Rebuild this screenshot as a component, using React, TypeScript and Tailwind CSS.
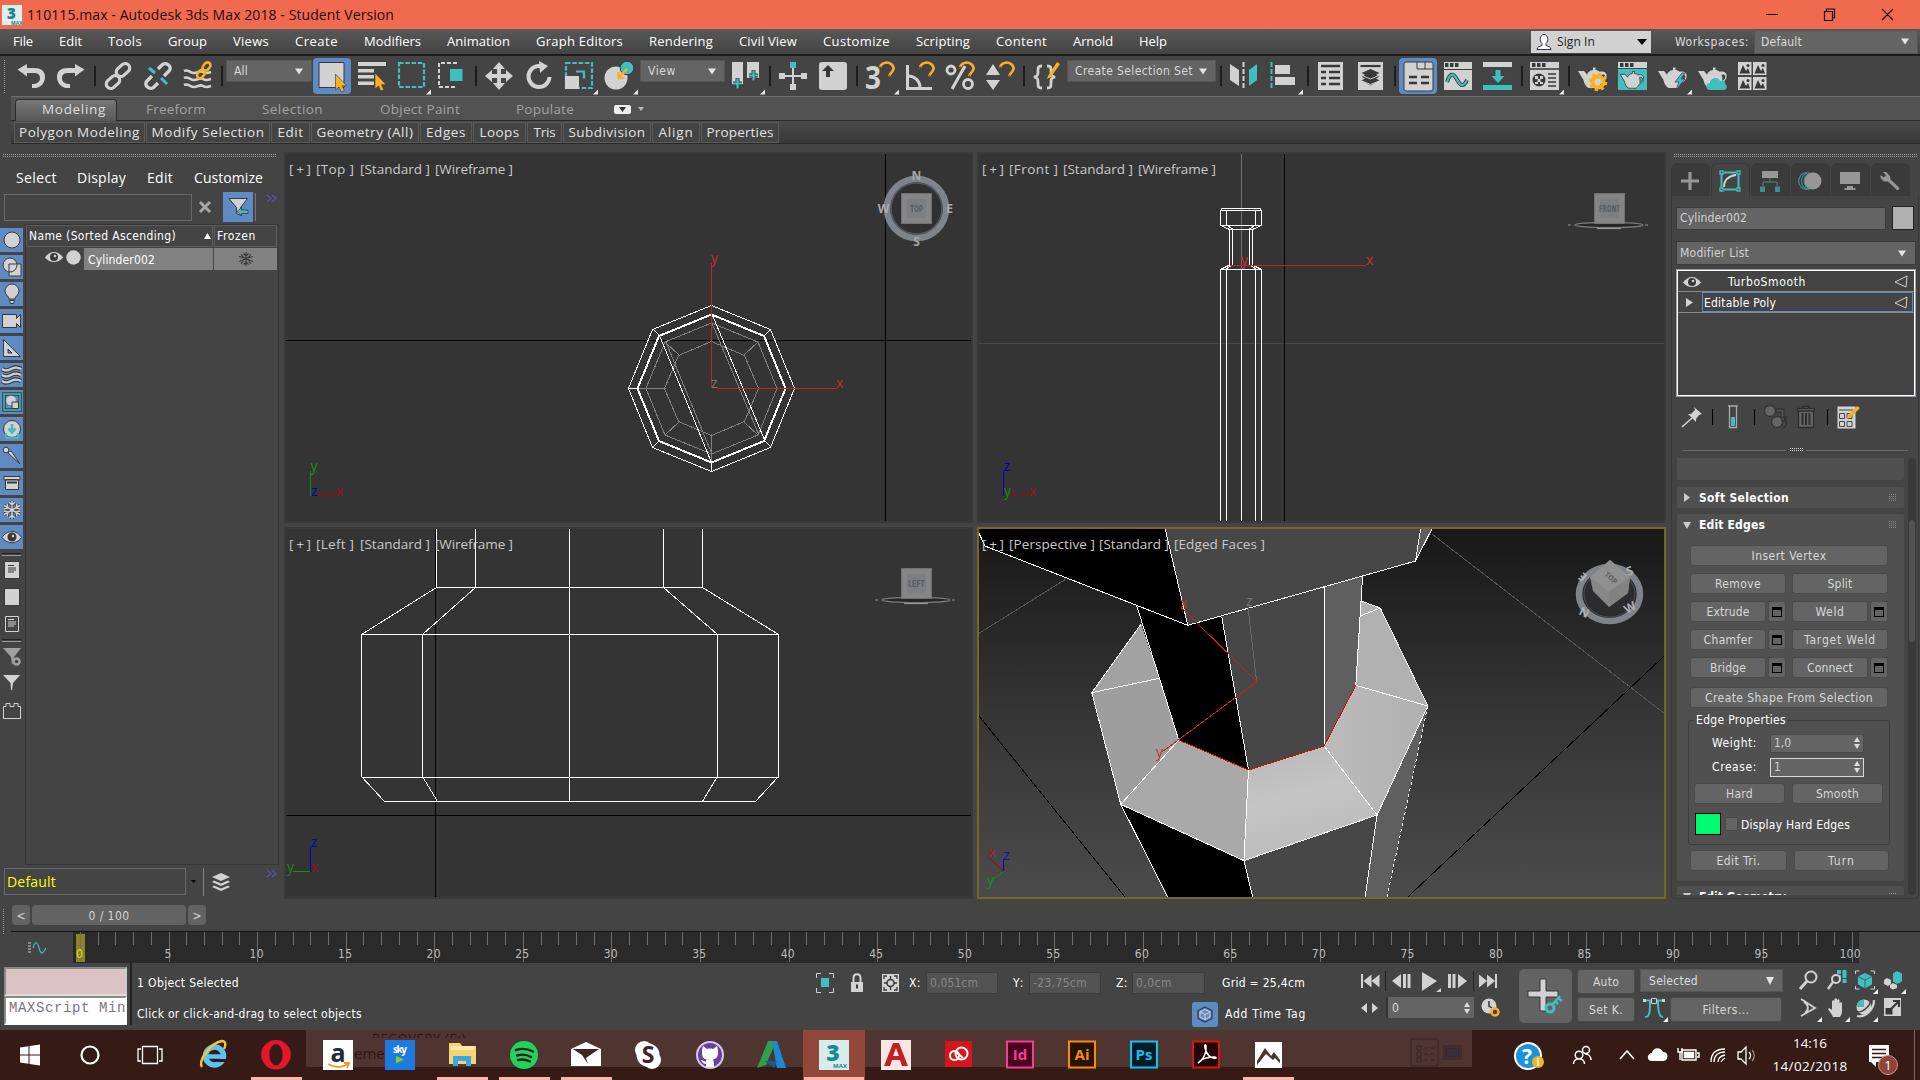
import React, { useLayoutEffect, useRef } from "react";

const G = "#d2d2d2";
const T = "#41bfc0";
const O = "#fbb022";
const D = "#383838";

/* Text whose tracking is adjusted so that it spans a given width. */
function Fit({ w, children, className = "" }: { w: number; children: string; className?: string }) {
  const ref = useRef<HTMLSpanElement>(null);
  useLayoutEffect(() => {
    const el = ref.current;
    if (!el) return;
    el.style.letterSpacing = "0px";
    const natural = el.getBoundingClientRect().width;
    el.style.letterSpacing = `${(w - natural) / children.length}px`;
  }, [w, children]);
  return (
    <span ref={ref} className={"inline-block shrink-0 whitespace-pre " + className}>
      {children}
    </span>
  );
}

function Slot({ children, fly, active }: { children: React.ReactNode; fly?: boolean; active?: boolean }) {
  return (
    <div className="h-10 w-10 shrink-0">
      <svg width="40" height="40" viewBox="0 0 40 40" className="block">
        {active && <rect x="1" y="2" width="38" height="36" rx="4" fill="#5f8bc4" />}
        {children}
        {fly && <path d="M39 33.500v5h-5z" fill="#e6e6e6" />}
      </svg>
    </div>
  );
}

const Sep = () => (
  <div className="flex h-10 w-[7px] shrink-0 items-center justify-center">
    <div className="h-5 w-[2px] bg-[#1c1c1c]" />
  </div>
);

function Drop({ label, cls, tw }: { label: string; cls: string; tw: number }) {
  return (
    <div className={"mt-1 flex h-[22px] shrink-0 items-center justify-between border border-[#555] bg-[#646464] pr-2 pl-[7px] text-[12px] text-[#d8d8d8] " + cls}>
      <Fit w={tw}>{label}</Fit>
      <svg width="8" height="7" viewBox="0 0 8 7"><path d="M0 .500h8l-4 6z" fill="#e4e4e4" /></svg>
    </div>
  );
}

const Magnet = () => (
  <g fill="none" stroke={O} strokeWidth="2.600">
    <path d="M20 11c1.500-4 7-6 11-3s3 6 0 9l-2 3" />
    <path d="M19.500 13l1-2.500M30 18.500l-1.500 2.500" stroke="#8a5d00" strokeWidth="1" />
  </g>
);

const Teapot = () => (
  <path
    d="M5 15h6l3 3.500c1-2.500 3-4 6-4.500v-2.500h2.500V14c2 .2 3 .8 4 1.800 5-1.300 8 1.500 7 5.500-.6 3-3 5-5.500 6-.8 2-2 3.700-3.500 4.700h-9c-3-1.500-4.500-5-5-8zm23.500 4c1 2 1 4 .5 6 2-.8 3-2 3.300-4 .3-2-1.300-3-3.800-2z"
    fill={G}
    fillRule="evenodd"
  />
);

const Cursor = ({ x, y }: { x: number; y: number }) => (
  <path transform={`translate(${x} ${y})`} d="M0 0v16l3.500-3 2.300 5 3-1.300-2.300-5h4.700z" fill={O} stroke={D} strokeWidth=".6" />
);

function Toolbar() {
  return (
    <div className="flex h-10 shrink-0 bg-[#444444] pl-[3px]">
      <div className="mt-1 mr-[5px] h-[34px] w-[3px] bg-[conic-gradient(#999_25%,transparent_0)] bg-[length:2px_2px]" />
      <Slot><path d="M6.500 13.500L16 8v4h7c7 0 11 3 11 9s-4 10-9 11h-4v-4c5 0 8-2 8-6s-3-5-6-5h-7v3.500z" fill={G} /></Slot>
      <Slot><path d="M33.500 13.500L24 8v4h-7C10 12 6 15 6 21s4 10 9 11h4v-4c-5 0-8-2-8-6s3-5 6-5h7v3.500z" fill={G} /></Slot>
      <Sep />
      <Slot>
        <g fill="none" stroke={G} strokeWidth="3.200">
          <rect x="-7.500" y="-4.500" width="15" height="9" rx="4.500" transform="translate(25 14) rotate(-42)" />
          <rect x="-7.500" y="-4.500" width="15" height="9" rx="4.500" transform="translate(15 26) rotate(-42)" />
        </g>
      </Slot>
      <Slot>
        <g fill="none" stroke={G} strokeWidth="3.400">
          <path d="M20 13l4-4c4-4 11 2 7 6l-5 5M20 27l-4 4c-4 4-11-2-7-6l5-5" />
          <path d="M11 12l6 5M23 22l6 6" stroke={T} strokeWidth="3" />
        </g>
      </Slot>
      <Slot>
        <g fill="none" stroke={G} strokeWidth="2.600">
          <path d="M6 15c4-2 6 2 10 2s6-3 9-1 5 1 8 0M6 22c4-2 6 2 10 2s6-3 9-1 5 1 8 0M6 29c4-2 6 2 10 2s6-3 9-1 5 1 8 0" />
        </g>
        <g fill="none" stroke={O} strokeWidth="2.600">
          <rect x="-4.500" y="-3" width="9" height="6" rx="3" transform="translate(28.500 10.500) rotate(-50)" />
          <rect x="-4.500" y="-3" width="9" height="6" rx="3" transform="translate(23 18) rotate(-50)" />
        </g>
      </Slot>
      <Sep />
      <Drop label="All" tw={14} cls="w-[86px] ml-px" />
      <Slot active><path d="M7 6.500h25v25H7z" fill={G} stroke={D} /><Cursor x={23.500} y={18} /></Slot>
      <Slot><path d="M6 6h28v4H6zM6 13h16v3.500H6zM6 19h16v3.500H6zM6 25.500h16V29H6z" fill={G} /><Cursor x={23} y={17} /></Slot>
      <Slot fly><rect x="7" y="7" width="25" height="24" fill="none" stroke={T} strokeWidth="2.200" strokeDasharray="4.500 1.800" /></Slot>
      <Slot><path d="M25 7H7v24h18" fill="none" stroke={G} strokeWidth="2" strokeDasharray="4 2" /><path d="M18 13h12.500v12H18z" fill={T} /></Slot>
      <Sep />
      <Slot><path d="M20 6l6 7h-4v5h5v-4l7 6-7 6v-4h-5v5h4l-6 7-6-7h4v-5h-5v4l-7-6 7-6v4h5v-5h-4z" fill={G} /></Slot>
      <Slot><path d="M22 10h-2a10.500 10.500 0 1 0 10.500 11" fill="none" stroke={G} strokeWidth="4" /><path d="M20 5l9 5-8 7z" fill={G} /></Slot>
      <Slot fly>
        <rect x="7" y="7" width="26" height="25" fill="none" stroke={T} strokeWidth="2.200" strokeDasharray="4.500 1.800" />
        <path d="M6 20h14v13H6z" fill={G} /><path d="M17 15.500h8v7" fill="none" stroke={T} strokeWidth="2.200" />
      </Slot>
      <Slot fly>
        <circle cx="17" cy="22" r="11.500" fill={G} /><circle cx="28" cy="12" r="6.800" fill={T} stroke={D} />
        <path d="M28 13l-8 8m-.5-5v6h6" fill="none" stroke={O} strokeWidth="2.400" />
      </Slot>
      <Drop label="View" tw={28} cls="w-[85px] mx-px" />
      <Slot fly>
        <path d="M6 6h11v22H6zM21 6h12v16H21z" fill={G} />
        <path d="M11.500 22v11M7 27.500h9M27.500 14v11M23 19.500h9" stroke={D} strokeWidth="4" /><path d="M11.500 22.500v10M7 27.500h9M27.500 14.500v10M23 19.500h9" stroke={T} strokeWidth="2.200" />
      </Slot>
      <Sep />
      <Slot>
        <path d="M20 10v20M9 20h22" stroke={G} strokeWidth="2" /><path d="M17 6h6v6h-6z" fill={T} />
        <path d="M17 28h6v6h-6zM6 17h6v6H6zM28 17h6v6h-6z" fill={G} />
      </Slot>
      <Slot><rect x="6" y="6" width="28" height="28" rx="3" fill={G} /><path d="M15 9l6 6h-4v6h-4v-6H9z" fill={D} /></Slot>
      <Sep />
      <Slot fly><text x="5" y="33" fontSize="32" fontWeight="700" textLength="16" lengthAdjust="spacingAndGlyphs" fill={G} fontFamily="Open Sans">3</text><Magnet /></Slot>
      <Slot><path d="M7.500 9v23.500H32M8 20c7 0 12 5 12 12" fill="none" stroke={G} strokeWidth="3" /><Magnet /></Slot>
      <Slot>
        <g fill="none" stroke={G} strokeWidth="2.800"><circle cx="11" cy="14" r="4" /><circle cx="28" cy="28" r="4.500" /><path d="M25 10L12 33" strokeWidth="3" /></g><Magnet />
      </Slot>
      <Slot><path d="M13 8l7 11H6zM6 24h14l-7 10z" fill={G} /><Magnet /></Slot>
      <Sep />
      <Slot>
        <path d="M15 10c-4 0-4 1-4 5s0 5-4 6c4 1 4 2 4 6s0 5 4 5M20 10c4 0 4 1 4 5s0 5 4 6c-4 1-4 2-4 6s0 5-4 5" fill="none" stroke={G} strokeWidth="2.800" />
        <path d="M21 20l9-14 3 2-9 13-4 2z" fill={O} />
      </Slot>
      <Drop label="Create Selection Set" tw={118} cls="w-[149px]" />
      <div className="w-px" />
      <Sep />
      <Slot><path d="M6 8l9 6v16l-9-6z" fill={G} /><path d="M19.500 6v28" stroke={G} strokeWidth="2" strokeDasharray="5 2" /><path d="M33 8l-8 6v16l8-6z" fill={T} /></Slot>
      <Slot fly><path d="M7.500 6v28" stroke={T} strokeWidth="2" strokeDasharray="5 2" /><path d="M11 9h15v9H11zM11 21h20v8H11z" fill={G} /></Slot>
      <Sep />
      <Slot><path d="M7 6h25v28H7z" fill={G} /><path d="M10 10h19M10 16h5m3 0h11M10 22h5m3 0h11M10 28h5m3 0h11" stroke={D} strokeWidth="2.400" /></Slot>
      <Slot><path d="M7 6h25v28H7z" fill={G} /><path d="M9.500 10h20" stroke={D} strokeWidth="2.200" /><path d="M19.500 13l9 4-3.500 1.800 3.500 2-3.500 1.700 3.500 2-9 5-9-5 3.500-2-3.500-1.700 3.500-2L10.500 17z" fill={D} /><path d="M11 19.500l8.500 3.500 8.500-3.500M11 25l8.500 3.500L28 25" stroke={G} fill="none" /></Slot>
      <Sep />
      <Slot active>
        <rect x="6" y="6" width="29" height="29" rx="2" fill={G} stroke={D} />
        <path d="M19 6v7h16M27 6v7" stroke={D} fill="none" /><path d="M11 21h8m4 0h8M11 27h8m4 0h8" stroke={D} strokeWidth="2.600" />
      </Slot>
      <Slot><path d="M6 6h28v28H6z" fill={G} /><path d="M7 9h3.500m1.500 0h3.500m1.500 0h3.500" stroke={D} strokeWidth="4" /><path d="M6 13.500h28" stroke={D} /><path d="M9 26c3-9 6-9 9-4s6 12 11 2" stroke={D} strokeWidth="4" fill="none" /><path d="M9 26c3-9 6-9 9-4s6 12 11 2" stroke={T} strokeWidth="2.200" fill="none" /></Slot>
      <Slot><path d="M5 6h29v5H5z" fill={G} /><path d="M5 29h29v5H5zM17.500 14h5v6h4L20 27l-6.500-7h4z" fill={T} /></Slot>
      <Sep />
      <Slot fly>
        <path d="M5 6h29v28H5z" fill={G} /><path d="M7 9h3.500m1.500 0h3.500m1.500 0h3.500" stroke={D} strokeWidth="4" /><path d="M5 13h29M23 18h8m-8 4h8m-8 4h8m-8 4h8" stroke={D} strokeWidth="1.700" />
        <circle cx="14" cy="24" r="6.500" fill={D} /><path d="M10 20h3v3h-3zM15 20h3v3h-3zM12.500 23h3v3h-3zM10 26h3v2h-3zM15 26h3v2h-3z" fill={G} />
      </Slot>
      <Sep />
      <div className="w-px" />
      <Slot><Teapot /><circle cx="25" cy="26" r="5.500" fill="none" stroke={O} strokeWidth="4" /><circle cx="25" cy="26" r="8" fill="none" stroke={O} strokeWidth="2.500" strokeDasharray="3.200 3.080" /></Slot>
      <Slot><path d="M5 6h29v6H5z" fill={G} /><path d="M7 9h3.500m1.500 0h3.500m1.500 0h3.500" stroke={D} strokeWidth="4" /><path d="M5 13h29v21H5z" fill={T} /><g transform="translate(3 6) scale(.82)" stroke={D}><Teapot /></g></Slot>
      <Slot fly><Teapot /><path d="M29 17l-7 9h4l-3 8 9-11h-4l4-6z" fill={T} stroke={D} strokeWidth=".7" /></Slot>
      <Slot><Teapot /><path d="M17 34c-5 0-5-7 0-7 0-5 8-7 10-2 5-1 6 2 5 3 3 1 2 6-1 6z" fill={T} /></Slot>
      <Slot>
        {[[5, 6], [20, 6], [5, 21], [20, 21]].map(([x, y]) => (
          <g key={`${x}-${y}`} transform={`translate(${x} ${y})`}><path d="M0 0h13.500v13H0z" fill={G} /><path d="M1.500 11.500L5 3l3 6 2-3 2 5.500z" fill={D} /><circle cx="10" cy="3.500" r="1.500" fill={D} /></g>
        ))}
      </Slot>
    </div>
  );
}

const menus: [string, number][] = [
  ["File", 20], ["Edit", 23], ["Tools", 34], ["Group", 39], ["Views", 36], ["Create", 43], ["Modifiers", 57], ["Animation", 63],
  ["Graph Editors", 87], ["Rendering", 64], ["Civil View", 58], ["Customize", 67], ["Scripting", 54], ["Content", 51], ["Arnold", 40], ["Help", 28],
];

function Header() {
  return (
    <>
      <div className="flex h-[29px] shrink-0 items-center bg-[#f06a50] pl-[2px] font-['Open_Sans',sans-serif] text-[14px] text-[#1d0d0a]">
        <svg width="20" height="20" viewBox="0 0 20 20"><path d="M0 0h20v20H0z" fill="#dfeeee" /><text x="5" y="14" fontSize="15" fontWeight="800" fill="#16858c">3</text><text x="9" y="19.500" fontSize="5" fontWeight="700" fill="#16858c">MAX</text></svg>
        <Fit w={367} className="ml-[5px]">110115.max - Autodesk 3ds Max 2018 - Student Version</Fit>
        <svg width="130" height="20" viewBox="0 0 130 20" className="mr-[26px] ml-auto" fill="none" stroke="#1a0a08">
          <path d="M2 9.500h12M60.500 6.500h8v9h-8zM62.500 6v-2h8v9h-2M118 4l11 11M129 4l-11 11" strokeWidth="1.200" />
        </svg>
      </div>
      <div className="flex h-[27px] shrink-0 items-center border-b-2 border-[#1c1c1c] bg-gradient-to-b from-[#585858] to-[#444] pl-[13px] font-['Open_Sans',sans-serif] text-[13px] text-white">
        <div className="flex gap-[26px]">{menus.map(([m, w]) => <Fit key={m} w={w}>{m}</Fit>)}</div>
        <div className="mr-6 ml-auto flex h-[22px] w-[120px] items-center bg-[#d2d2d2] pr-1 pl-[5px] text-[12px] text-[#222]">
          <svg width="16" height="18" viewBox="0 0 16 18" fill="#fff" stroke="#334"><path d="M1 16.500c0-3 3-3 5-4v-2C3 8 4 1.500 8 1.500S13 8 10 10.500v2c2 1 5 1 5 4z" /></svg>
          <Fit w={38} className="ml-[5px]">Sign In</Fit>
          <svg width="10" height="7" viewBox="0 0 10 7" className="ml-auto"><path d="M0 1h10L5 7z" fill="#000" /></svg>
        </div>
        <Fit w={74} className="mr-[5px] font-['DejaVu_Sans_Condensed','DejaVu_Sans',sans-serif] text-[12px] text-[#dcdcdc]">Workspaces:</Fit>
        <div className="mr-[2px] flex h-[24px] w-[164px] items-center justify-between border border-[#555] bg-[#646464] pr-2 pl-[6px] font-['DejaVu_Sans_Condensed','DejaVu_Sans',sans-serif] text-[12px] text-[#dcdcdc]">
          <Fit w={41}>Default</Fit>
          <svg width="8" height="7" viewBox="0 0 8 7"><path d="M0 .500h8l-4 6z" fill="#e4e4e4" /></svg>
        </div>
      </div>
    </>
  );
}

function Ribbon() {
  const panel = "flex h-[21px] items-center justify-center border border-[#5a5a5a] bg-[#444]";
  return (
    <div className="shrink-0 font-['Open_Sans',sans-serif] text-[13.500px]">
      <div className="ml-[11px] flex h-[25px] items-center border-t border-b border-t-[#6e6e6e] border-b-[#282828] bg-[#525252] pt-px text-[#a3a3a3]">
        <div className="mt-px ml-1 flex h-[22px] w-[102px] items-center rounded-t-sm border border-b-0 border-[#2c2c2c] bg-gradient-to-b from-[#777] to-[#585858] pb-px pl-[26px] text-[#dedede]"><Fit w={64}>Modeling</Fit></div>
        <Fit w={60} className="ml-[29px]">Freeform</Fit>
        <Fit w={61} className="ml-[56px]">Selection</Fit>
        <Fit w={80} className="ml-[57px]">Object Paint</Fit>
        <Fit w={58} className="ml-[56px]">Populate</Fit>
        <div className="ml-[40px] flex h-[9px] w-[17px] items-center justify-center rounded-[2px] bg-[#eee]"><svg width="7" height="5" viewBox="0 0 7 5"><path d="M0 0h7L3.500 5z" fill="#333" /></svg></div>
        <svg width="6" height="4" viewBox="0 0 6 4" className="ml-[7px]"><path d="M0 0h6L3 4z" fill="#bbb" /></svg>
      </div>
      <div className="ml-[11px] flex h-[23px] items-center gap-px border-b border-[#282828] bg-gradient-to-b from-[#4a4a4a] to-[#383838] pl-[3px] text-[#e2e2e2]">
        <div className={panel + " w-[131px]"}><Fit w={121}>Polygon Modeling</Fit></div>
        <div className={panel + " w-[124px]"}><Fit w={113}>Modify Selection</Fit></div>
        <div className={panel + " w-[39px]"}><Fit w={26}>Edit</Fit></div>
        <div className={panel + " w-[108px]"}><Fit w={97}>Geometry (All)</Fit></div>
        <div className={panel + " w-[52px]"}><Fit w={40}>Edges</Fit></div>
        <div className={panel + " w-[53px]"}><Fit w={40}>Loops</Fit></div>
        <div className={panel + " w-[35px]"}><Fit w={22}>Tris</Fit></div>
        <div className={panel + " w-[88px]"}><Fit w={77}>Subdivision</Fit></div>
        <div className={panel + " w-[48px]"}><Fit w={35}>Align</Fit></div>
        <div className={panel + " w-[78px]"}><Fit w={67}>Properties</Fit></div>
      </div>
    </div>
  );
}

const Grip = ({ cls }: { cls: string }) => (
  <div className={"h-[4px] shrink-0 bg-[conic-gradient(#a5a5a5_25%,transparent_0)] bg-[length:2px_2px] " + cls} />
);

const Chevrons = ({ cls }: { cls: string }) => (
  <svg width="12" height="9" viewBox="0 0 12 9" className={cls}><path d="M1 1l4 3.500L1 8M6 1l4 3.500L6 8" fill="none" stroke="#5757a0" strokeWidth="1.300" /></svg>
);

const stripIcons: React.ReactNode[] = [
  <circle cx="12" cy="12" r="8" fill={G} stroke={D} />,
  <g fill={G} stroke={D}><circle cx="10" cy="10" r="7" /><path d="M9 9h12v12H9z" /><path d="M17 9.500a7 7 0 0 1-8 7.500" fill="none" /></g>,
  <path d="M9 17c0-3-4-4-4-8a7 7 0 0 1 14 0c0 4-4 5-4 8zM9.500 18.500h5l-1 3h-3z" fill={G} stroke={D} />,
  <path d="M2.500 5.500h14v4l4-4v13l-4-4v4h-14z" fill={G} stroke={D} />,
  <path d="M3.500 3.500l17 17h-17zM8 13v4h4z" fill={G} fillRule="evenodd" stroke={D} />,
  <g fill="none"><path d="M2 6c4 3 7 1 9 0s5-3 10 0M2 12c4 3 7 1 9 0s5-3 10 0M2 18c4 3 7 1 9 0s5-3 10 0" stroke={D} strokeWidth="4.500" /><path d="M2 6c4 3 7 1 9 0s5-3 10 0M2 12c4 3 7 1 9 0s5-3 10 0M2 18c4 3 7 1 9 0s5-3 10 0" stroke={G} strokeWidth="2.200" /></g>,
  <g><rect x="4" y="4" width="16" height="16" fill="none" stroke={D} strokeWidth="3.500" /><rect x="4" y="4" width="16" height="16" fill="none" stroke={T} strokeWidth="1.500" /><circle cx="11" cy="10.500" r="4.800" fill={G} /><path d="M12 12h6.500v6.500H12z" fill={G} stroke={D} /></g>,
  <g><circle cx="12" cy="12" r="8.500" fill={G} stroke={D} /><path d="M12 7v7M8.500 11.500L12 15.500l3.500-4" stroke={T} strokeWidth="2.500" fill="none" /><path d="M6 16v4.500h12V16" stroke={T} strokeWidth="1.800" fill="none" /></g>,
  <g fill={G} stroke={D}><circle cx="6" cy="6" r="2.800" /><path d="M8 9c0-2 3-2 4-1l8 12z" /></g>,
  <g fill={G} stroke={D}><path d="M5.500 8.500h13v10h-13zM4 5.500h16v3.500H4z" /><path d="M7 11.500h10" strokeWidth="2" /></g>,
  <g><path d="M12 3v18M4 7.500l16 9M20 7.500l-16 9M9 4l3 3 3-3M9 20l3-3 3 3M4 11l4-1-1-4M20 13l-4 1 1 4M20 11l-4-1 1-4M4 13l4 1-1 4" stroke={D} strokeWidth="3" fill="none" /><path d="M12 3v18M4 7.500l16 9M20 7.500l-16 9M9 4l3 3 3-3M9 20l3-3 3 3M4 11l4-1-1-4M20 13l-4 1 1 4M20 11l-4-1 1-4M4 13l4 1-1 4" stroke={G} strokeWidth="1.500" fill="none" /></g>,
  <g><path d="M2 12.500c5-8 15-8 19.500 0-4.500 7-14.500 7-19.500 0z" fill={G} stroke={D} /><circle cx="12" cy="12" r="4.500" fill={D} /><circle cx="13" cy="11" r="1.300" fill={G} /></g>,
];

const Eye = () => (
  <svg width="18" height="12" viewBox="0 0 18 12"><path d="M0 6.500C5-1 13-1 18 6.500 13 12.500 5 12.500 0 6.500z" fill={G} /><circle cx="9" cy="6" r="4" fill={D} /><circle cx="10" cy="5" r="1.300" fill={G} /></svg>
);

function LeftPanel() {
  const ic = "flex h-[27px] w-[24px] items-center justify-center";
  const rule = "mx-[2px] h-[3px] w-[19px] border-t border-b border-t-[#222] border-b-[#999]";
  return (
    <div className="flex w-[284px] shrink-0 flex-col">
      <Grip cls="mt-[10px] ml-[2px] w-[275px]" />
      <div className="mt-[7px] flex h-[24px] items-center pl-4 font-['Open_Sans',sans-serif] text-[14px] text-white">
        <Fit w={41}>Select</Fit><Fit w={49} className="ml-[20px]">Display</Fit><Fit w={26} className="ml-[21px]">Edit</Fit><Fit w={69} className="ml-[21px]">Customize</Fit>
      </div>
      <div className="mt-[3px] flex h-[30px] items-center pl-1">
        <div className="h-[27px] w-[188px] border border-[#6a6a6a]" />
        <svg width="14" height="14" viewBox="0 0 14 14" className="ml-[6px]"><path d="M2 2l10 10M12 2L2 12" stroke="#a5a5a5" strokeWidth="3" /></svg>
        <div className="ml-[11px] h-[30px] w-[30px] bg-[#5f8bc4]">
          <svg width="30" height="30" viewBox="0 0 30 30"><path d="M6 6.500h18.500l-7 9v8l-4-2v-6z" fill={G} stroke={D} /><path d="M14 19.500l4.500-4v2.500H25v3.500h-6.500V24z" fill={T} stroke={D} strokeWidth=".8" /></svg>
        </div>
        <div className="ml-[2px] h-7 w-[2px] border-l border-[#777]" />
        <Chevrons cls="mb-[17px] ml-[9px]" />
      </div>
      <div className="mt-[2px] flex h-[641px]">
        <div className="flex w-[25px] shrink-0 flex-col pt-[4px]">
          <div className="flex flex-col gap-[3px]">
            {stripIcons.map((icon, i) => <svg key={i} width="23" height="24" viewBox="0 0 23 24" className="block bg-[#5f8bc4]">{icon}</svg>)}
          </div>
          <div className={rule + " mt-[4px]"} />
          <div className={ic}><svg width="16" height="18" viewBox="0 0 16 18"><path d="M.500.500h15v17H.500z" fill={G} stroke={D} /><path d="M4 4.500h6M4 7h8M4 9h8M4 11h6" stroke={D} strokeWidth="1.100" /></svg></div>
          <div className={ic}><svg width="16" height="18" viewBox="0 0 16 18"><path d="M.500.500h15v17H.500z" fill={G} stroke={D} /></svg></div>
          <div className={ic}><svg width="16" height="18" viewBox="0 0 16 18"><path d="M1.500 1.500h13v15h-13z" fill="none" stroke={G} /><path d="M4 4.500h6M4 7h8M4 9h8M4 11h6" stroke={G} strokeWidth="1.100" /></svg></div>
          <div className={rule + " mt-[2px]"} />
          <div className={ic + " mt-px"}><svg width="18" height="18" viewBox="0 0 18 18"><path d="M0 0h18l-7 9-2 8-1-8z" fill="#a0a0a0" /><circle cx="13.500" cy="13.500" r="3" fill="#444" stroke="#a0a0a0" strokeWidth="2.500" /></svg></div>
          <div className={ic}><svg width="18" height="18" viewBox="0 0 18 18"><path d="M0 0h17l-7 8-1 7H8L7.500 8z" fill={G} /></svg></div>
          <div className={ic}><svg width="18" height="18" viewBox="0 0 18 18"><path d="M.500 16.500V4.500H3v-3h4v3h4v-3h4v3h2.500v12z" fill="none" stroke={G} /></svg></div>
        </div>
        <div className="w-[254px] border border-[#363636] font-['DejaVu_Sans_Condensed','DejaVu_Sans',sans-serif] text-[12px] text-white">
          <div className="flex h-[22px]">
            <div className="flex w-[187px] items-center justify-between border border-[#5c5c5c] pr-px pl-[2px]"><Fit w={147}>Name (Sorted Ascending)</Fit><svg width="7" height="6" viewBox="0 0 7 6"><path d="M3.500 0L7 6H0z" fill="#fff" /></svg></div>
            <div className="ml-px flex w-[63px] items-center border border-[#5c5c5c] pl-[2px]"><Fit w={39}>Frozen</Fit></div>
          </div>
          <div className="mt-px flex h-[22px] items-center">
            <div className="mb-1 ml-[19px] flex items-center gap-[3px]"><Eye /><svg width="15" height="15" viewBox="0 0 15 15"><circle cx="7.500" cy="7.500" r="7.200" fill={G} /></svg></div>
            <div className="ml-[3px] flex h-full w-[129px] items-center bg-[#818181] pt-px pl-[4px]"><Fit w={67}>Cylinder002</Fit></div>
            <div className="ml-px flex h-full w-[63px] items-center justify-center bg-[#818181]">
              <svg width="14" height="14" viewBox="0 0 14 14"><path d="M7 0v14M0 4.500l5 1.200L14 9.500M14 4.500l-5 1.200L0 9.500M2 2l2.500 3.500M12 2L9.500 5.500M2 12l2.500-3.500M12 12L9.500 8.500M4.500 1.500L7 4l2.500-2.500M4.500 12.500L7 10l2.500 2.500" stroke="#383838" strokeWidth="1.100" fill="none" /></svg>
            </div>
          </div>
        </div>
      </div>
      <div className="mt-[3px] flex h-[27px] items-center pl-1">
        <div className="flex h-[27px] w-[182px] items-center border border-[#6a6a6a] pb-px pl-[2px] font-['Open_Sans',sans-serif] text-[14px] text-[#ffff00]"><Fit w={49}>Default</Fit></div>
        <svg width="5" height="3" viewBox="0 0 5 3" className="ml-[5px]"><path d="M0 0h5L2.500 3z" fill="#000" /></svg>
        <div className="ml-[7px] h-7 w-px bg-[#888]" />
        <svg width="18" height="20" viewBox="0 0 18 20" className="ml-[8px]"><g fill={G}><path d="M9 1l9 4-9 4-9-4zM2 8.500L0 10l9 4 9-4-2-1.500-7 3zM2 13.500L0 15l9 4 9-4-2-1.500-7 3z" /></g></svg>
        <Chevrons cls="mb-[17px] ml-[36px]" />
      </div>
    </div>
  );
}

function Cube({ x, y, label }: { x: number; y: number; label: string }) {
  return (
    <g transform={`translate(${x} ${y})`}>
      <rect x=".5" y=".5" width="30" height="30" fill="#858585" stroke="#707070" />
      <rect x="6" y="6" width="19" height="19" fill="#7c7e83" />
      <text x="15.500" y="18.500" fontSize="8" fontWeight="700" fill="#5a5c60" textAnchor="middle" textLength={label.length * 4.200} lengthAdjust="spacingAndGlyphs">{label}</text>
    </g>
  );
}

const FlatRing = ({ x, y }: { x: number; y: number }) => (
  <g transform={`translate(${x} ${y})`}>
    <path d="M-41 0h3M36 0h3" stroke="#90949a" />
    <ellipse cx="0" cy="0" rx="34" ry="2.600" fill="#262626" stroke="#777b80" strokeWidth="1.400" />
    <path d="M-12 3.600h24" stroke="#a0a0a0" />
  </g>
);

const VLabel = ({ x, y, parts }: { x: number; y: number; parts: [string, number, number][] }) => (
  <g fill="#c9c9c9" fontSize="13.500" fontFamily="Open Sans, sans-serif">
    {parts.map(([t, dx, w]) => <text key={t} x={x + dx} y={y} textLength={w}>{t}</text>)}
  </g>
);

const oct = (r: number, rd: number) =>
  [[0, -r], [rd, -rd], [r, 0], [rd, rd], [0, r], [-rd, rd], [-r, 0], [-rd, -rd]].map(([a, b]) => `${711.500 + a},${388.500 + b}`).join(" ");

function Viewports() {
  const box = "block bg-[#343434] border-2 border-[#393939]";
  return (
    <div className="grid w-[1382px] shrink-0 grid-cols-[689px_689px] grid-rows-[371px_372px] gap-1 pt-2">
      <svg className={box} width="689" height="371" viewBox="286 154 685 367">
        <g shapeRendering="crispEdges" fill="none">
          <path d="M286 340.500h685M885.500 154v367" stroke="#000" />
          <g stroke="#808080">
            <polygon points={oct(65.500, 46.500)} /><polygon points={oct(47, 33)} />
            <path d="M665 342l14 13M758 342l-14 13M665 435l14-13M758 435l-14-13M638 388.500h28M711.500 434v28M665.500 341l46 112M711.500 322l47 112" />
          </g>
          <g stroke="#fff">
            <polygon points={oct(83, 59)} /><polygon points={oct(74, 52.500)} strokeWidth="2" />
            <path d="M653 329l6 6M771 329l-6 6M653 447l6-6M771 447l-6-6M629 388.500h9M711.500 462v9M659.500 335.500l52 127M712 314l53 127" />
          </g>
          <path d="M711.500 263v124M717 388.500h120" stroke="#c8201f" />
          <path d="M310.500 471v25" stroke="#00a000" /><path d="M316 495.500h22" stroke="#b00000" />
        </g>
        <g fontSize="14" fontFamily="Open Sans, sans-serif">
          <text x="711" y="263" fill="#c8302f">y</text><text x="836" y="388" fill="#c8302f">x</text><text x="711" y="388" fill="#777">z</text>
          <text x="310.500" y="470.500" fill="#1c8a1c">y</text><text x="336" y="496" fill="#a01010">x</text><text x="311" y="496" fill="#0000c0">z</text>
        </g>
        <circle cx="916.500" cy="208.500" r="29.500" fill="#303032" stroke="#7f838a" strokeWidth="6.500" />
        <circle cx="916.500" cy="208.500" r="25.500" fill="none" stroke="#55585e" strokeWidth="1.500" />
        <Cube x={901} y={193} label="TOP" />
        <g fontSize="12" fontWeight="700" fill="#a9a9a9" textAnchor="middle" fontFamily="Open Sans, sans-serif">
          <text x="916.500" y="180">N</text><text x="916.500" y="246">S</text><text x="883.500" y="213">W</text><text x="949.500" y="213">E</text>
        </g>
        <VLabel x={289} y={173.500} parts={[["[+]", 0, 22], ["[Top ]", 27, 38], ["[Standard ]", 71, 70], ["[Wireframe ]", 146, 78]]} />
      </svg>

      <svg className={box} width="689" height="371" viewBox="979 154 685 367">
        <g shapeRendering="crispEdges" fill="none">
          <path d="M979 343.500h685" stroke="#4a4a4a" /><path d="M1241.500 154v367" stroke="#707070" /><path d="M1284.500 154v367" stroke="#000" />
          <path
            stroke="#fff"
            d="M1222 208.500h38l1.500 2v15l-9 4h-23l-9-4v-15zM1220.500 210.500h41M1220.500 225.500h41M1226.500 210v15l6 4M1255.500 210v15l-6 4M1229.500 229v36M1232.500 229v36M1249.500 229v36M1252.500 229v36M1229.500 265l-9 4.500h41l-9-4.500M1232 265l-6 4M1250 265l6 4M1220.500 269v252M1226.500 269v252M1241.500 269v252M1255.500 269v252M1261.500 269v252"
          />
          <path d="M1230 265.500h136" stroke="#c8201f" />
          <path d="M1003.500 471v25" stroke="#0000d0" /><path d="M1009 495.500h22" stroke="#b00000" />
        </g>
        <g fontSize="14" fontFamily="Open Sans, sans-serif">
          <text x="1241" y="265" fill="#c8302f">y</text><text x="1366" y="265" fill="#c8302f">x</text>
          <text x="1003.500" y="471" fill="#0000c0">z</text><text x="1004" y="496" fill="#1c8a1c">y</text><text x="1029" y="496" fill="#a01010">x</text>
        </g>
        <FlatRing x={1609} y={225} /><Cube x={1594} y={193} label="FRONT" />
        <VLabel x={982} y={173.500} parts={[["[+]", 0, 22], ["[Front ]", 27, 49], ["[Standard ]", 81, 70], ["[Wireframe ]", 156, 78]]} />
      </svg>

      <svg className={box} width="689" height="372" viewBox="286 529 685 368">
        <g shapeRendering="crispEdges" fill="none">
          <path d="M286 815.500h685M435.500 529v368" stroke="#000" />
          <path
            stroke="#fff"
            d="M436.500 529v58.500h266V529M475.500 529v58.500l-53 47v142l15 25M663.500 529v58.500l54 47v142l-15 25M569.500 529v272M436.500 587.500l-75 47v142l23 25h371l23-25v-142l-76-47M361.500 634.500h417M361.500 777.500h417"
          />
          <path d="M310.500 847v25" stroke="#0000d0" /><path d="M293 871.500h17" stroke="#00a000" />
        </g>
        <g fontSize="14" fontFamily="Open Sans, sans-serif">
          <text x="310.500" y="847" fill="#0000c0">z</text><text x="287" y="872" fill="#1c8a1c">y</text><text x="311" y="872" fill="#a01010">x</text>
        </g>
        <FlatRing x={916} y={600} /><Cube x={901} y={568} label="LEFT" />
        <VLabel x={289} y={548.500} parts={[["[+]", 0, 22], ["[Left ]", 27, 38], ["[Standard ]", 71, 70], ["[Wireframe ]", 146, 78]]} />
      </svg>

      <svg className="block border-2 border-[#7d6523]" width="689" height="372" viewBox="979 529 685 368">
        <defs>
          <linearGradient id="sky" x1="0" y1="0" x2="0" y2="1"><stop offset="0" stopColor="#181818" /><stop offset=".5" stopColor="#353535" /><stop offset="1" stopColor="#4b4b4b" /></linearGradient>
          <linearGradient id="lit" x1="0" y1="0" x2=".3" y2="1"><stop offset="0" stopColor="#b9b9b9" /><stop offset=".5" stopColor="#c4c4c4" /><stop offset="1" stopColor="#bcbcbc" /></linearGradient>
          <linearGradient id="side" x1="0" y1="0" x2="1" y2="0"><stop offset="0" stopColor="#bcbcbc" /><stop offset="1" stopColor="#b0b0b0" /></linearGradient>
        </defs>
        <path d="M979 529h685v368H979z" fill="url(#sky)" />
        <g transform="translate(960 520) scale(.45285 .33333)" shapeRendering="crispEdges">
          <g fill="none">
            <path d="M233 178L42 340M1042 42l513 538" stroke="#555" vectorEffect="non-scaling-stroke" />
            <path d="M42 588l326 549M1555 408L984 1137" stroke="#000" vectorEffect="non-scaling-stroke" />
          </g>
          <path d="M355 853l272 169 21 118H464z" fill="#000" />
          <path d="M627 1022l294-137-27 252H648z" fill="#474747" />
          <path d="M921 885l112-327-91 579h-48z" fill="#5f5f5f" />
          <path d="M291 518L400 312l40 163z" fill="#a2a2a2" />
          <path d="M291 518l149-43 43 185-128 193z" fill="#9e9e9e" />
          <path d="M483 660l154 90-10 272-272-169z" fill="#a9a9a9" />
          <path d="M637 750l167-72 117 207-294 137z" fill="url(#lit)" />
          <path d="M804 678l70-182 159 62-112 327z" fill="url(#side)" />
          <path d="M886 243l42 21 105 294-159-62z" fill="#b1b1b1" />
          <path d="M390 256l113 60 75-26 59 460-154-90z" fill="#000" />
          <path d="M578 290l227-88-1 476-167 72z" fill="#474747" />
          <path d="M805 202l84-34-15 328-70 182z" fill="#5f5f5f" />
          <path d="M42 20h410l51 296L55 78 42 40z" fill="#000" />
          <path d="M452 20h566l-12 103-503 193z" fill="#474747" />
          <path d="M1018 20h26l-38 103z" fill="#5f5f5f" />
          <g fill="none" stroke="#fff">
            {[
              "M42 40l13 38 448 238 503-193 12-103", "M1006 123l36-96", "M452 20l51 296", "M390 256l93 404", "M578 290l59 460-10 272 21 118",
              "M805 202l-1 476 117 207-27 252", "M889 168l-15 328 159 62", "M400 312L291 518l64 335 272 169 294-137 112-327-105-294-42-21",
              "M291 518l149-43", "M884 288l44-24", "M483 660L355 853l107 287",
            ].map((d) => <path key={d} d={d} vectorEffect="non-scaling-stroke" />)}
            <path d="M1033 558l-91 579" strokeDasharray="3 3" vectorEffect="non-scaling-stroke" />
          </g>
          <g fill="none">
            <path d="M636 262l19 223" stroke="#686868" vectorEffect="non-scaling-stroke" />
            <path d="M488 262l168 223-211 212" stroke="#c8201f" vectorEffect="non-scaling-stroke" />
            <path d="M483 660l154 90 167-72 70-182" stroke="#d01010" vectorEffect="non-scaling-stroke" />
          </g>
        </g>
        <g fontSize="14" fontFamily="Open Sans, sans-serif">
          <text x="1180" y="608" fill="#c8302f">x</text><text x="1156" y="757" fill="#c8302f">y</text><text x="1246" y="606" fill="#777">z</text>
          <text x="988" y="857" fill="#b01818">x</text><text x="1003" y="860" fill="#1010c0">z</text><text x="987" y="885" fill="#1c8a1c">y</text>
        </g>
        <path d="M989 858l14 13" stroke="#b00000" fill="none" /><path d="M1003.500 871v-12" stroke="#0000d0" /><path d="M1003 872l-12 9" stroke="#00a000" />
        <ellipse cx="1609.500" cy="594" rx="30.500" ry="27" fill="#2c2c2e" stroke="#7f838a" strokeWidth="6.500" />
        <ellipse cx="1609.500" cy="594" rx="25.500" ry="23" fill="none" stroke="#4c4e52" />
        <path d="M1610 560l20 17-2 16-19 14-16-16-3-14z" fill="#878787" /><path d="M1590 577l19 15 21-15-20-17z" fill="#909090" /><path d="M1609 592l21-15-2 16-19 14z" fill="#828282" />
        <text x="0" y="0" transform="translate(1604 575) rotate(42)" fontSize="7" fontWeight="700" fill="#5f6166">TOP</text>
        <g fontSize="12" fontWeight="700" fill="#b0b0b0" fontFamily="Open Sans, sans-serif">
          <text transform="translate(1588 576) rotate(-140)">E</text><text transform="translate(1628 576) rotate(-20)">S</text>
          <text transform="translate(1578 614) rotate(25)">N</text><text transform="translate(1627 614) rotate(-30)">W</text>
        </g>
        <VLabel x={982} y={548.500} parts={[["[+]", 0, 22], ["[Perspective ]", 27, 86], ["[Standard ]", 117, 70], ["[Edged Faces ]", 192, 91]]} />
      </svg>
    </div>
  );
}

function Btn({ w, tw, children, h = "h-[21px]" }: { w: string; tw: number; children: string; h?: string }) {
  return <div className={"flex shrink-0 items-center justify-center rounded-[3px] border border-[#4a4a4a] bg-[#646464] text-[#d8d8d8] " + h + " " + w}><Fit w={tw}>{children}</Fit></div>;
}

const Mini = () => (
  <div className="ml-[2px] flex h-[21px] w-[18px] shrink-0 items-center justify-center rounded-[3px] border border-[#4a4a4a] bg-[#646464]">
    <div className="h-[10px] w-[10px] border border-t-[3px] border-black" />
  </div>
);

const Dots = () => <div className="mr-[8px] ml-auto h-[8px] w-[8px] bg-[conic-gradient(#8d8d8d_25%,transparent_0)] bg-[length:2px_2px]" />;

function Spin({ v, cls }: { v: string; cls: string }) {
  return (
    <div className={"flex h-[19px] w-[94px] items-center justify-between border bg-[#646464] pr-[3px] pl-[3px] text-[#d0d0d0] " + cls}>
      <span>{v}</span>
      <svg width="6" height="12" viewBox="0 0 6 12"><path d="M3 0l3 5H0zM3 12l3-5H0z" fill="#ddd" /></svg>
    </div>
  );
}

function RightPanel() {
  const tab = "flex h-[33px] w-[39px] items-center justify-center rounded-t-md bg-[#3a3a3a] pt-[3px] pr-[2px]";
  const roll = "rounded-[3px] border border-[#434343] bg-[#505050]";
  const stackTri = <svg width="14" height="13" viewBox="0 0 14 13" className="ml-auto"><path d="M1 7l12-6-1 11z" fill="none" stroke={G} /></svg>;
  return (
    <div className="flex w-[254px] shrink-0 flex-col pl-[5px] font-['DejaVu_Sans_Condensed','DejaVu_Sans',sans-serif] text-[12px]">
      <Grip cls="mt-[10px] ml-[2px] w-[245px]" />
      <div className="mt-[5px] flex gap-px">
        <div className={tab}><svg width="20" height="20" viewBox="0 0 20 20"><path d="M10 1v18M1 10h18" stroke="#979797" strokeWidth="3.200" /></svg></div>
        <div className="flex h-[34px] w-[39px] items-center justify-center rounded-t-md border border-b-0 border-[#393939] bg-[#444] pr-[2px]">
          <svg width="22" height="22" viewBox="0 0 22 22" fill="none" stroke={T}><path d="M4.500 2.500h13M4.500 19.500h13M2.500 4v14M19.500 4v14" strokeWidth="2" /><path d="M1 1h3v3H1zM18 1h3v3h-3zM1 18h3v3H1zM18 18h3v3h-3z" fill="#444" strokeWidth="1.300" /><path d="M5 17c0-7 5-11 12-12" stroke={G} strokeWidth="1.800" /></svg>
        </div>
        <div className={tab}><svg width="20" height="22" viewBox="0 0 20 22"><path d="M2 1h16v7H2z" fill="#979797" /><path d="M10 8v4M3 16v-4h14v4" fill="none" stroke="#3f8d8e" /><path d="M0 16.500h5V22H0zM15 16.500h5V22h-5z" fill="#3f8d8e" /></svg></div>
        <div className={tab}><svg width="24" height="18" viewBox="0 0 24 18"><g fill="none" stroke="#3f8d8e" strokeWidth="1.200"><path d="M9 .500C-2 1-2 17 9 17.500M11 .500C1 2 1 16 11 17.500M13 1C4 3 4 15 13 17" /></g><circle cx="15" cy="9" r="8.500" fill="#979797" /></svg></div>
        <div className={tab}><svg width="20" height="18" viewBox="0 0 20 18"><path d="M0 0h20v12H0zM7 14h6v2h2.500v2h-11v-2H7z" fill="#979797" /></svg></div>
        <div className={tab}><svg width="20" height="20" viewBox="0 0 20 20"><path d="M3 1h3l4 4 .500 3.500 8.500 8c1 2-1 3-2 2.500L8 10.500 4 10.500 .500 7V4L4 6.500l2-2z" fill="#979797" /></svg></div>
      </div>
      <div className="-mt-px flex h-[703px] w-[248px] flex-col rounded-b border border-t-0 border-[#393939] pl-[4px]">
        <div className="mt-[10px] flex items-center">
          <div className="flex h-[23px] w-[210px] items-center border border-[#3b3b3b] bg-[#646464] pl-[3px] text-[#d2d2d2]"><Fit w={67}>Cylinder002</Fit></div>
          <div className="ml-[6px] h-6 w-[22px] border border-[#222] bg-[#b0b0b0]" />
        </div>
        <div className="mt-[11px] flex h-[24px] w-[240px] items-center justify-between border border-[#3b3b3b] bg-[#646464] pr-[9px] pl-[3px] text-[#d2d2d2]"><Fit w={69}>Modifier List</Fit><svg width="8" height="7" viewBox="0 0 8 7"><path d="M0 .500h8l-4 6z" fill="#e4e4e4" /></svg></div>
        <div className="mt-[4px] h-[128px] w-[240px] border-2 border-white text-white outline outline-1 -outline-offset-1 outline-[#9aa0aa]">
          <div className="flex h-[21px] items-center border-b border-[#888] pt-px pr-[6px] pl-[5px]"><Eye /><Fit w={78} className="ml-[27px]">TurboSmooth</Fit>{stackTri}</div>
          <div className="flex h-[21px] items-center border-b border-[#888]">
            <svg width="7" height="9" viewBox="0 0 7 9" className="ml-[8px]"><path d="M0 0l7 4.500L0 9z" fill={G} /></svg>
            <div className="ml-[9px] flex h-[20px] w-[211px] items-center border border-[#5f8bc4] pt-px pr-[4px] pl-[1px]"><Fit w={72}>Editable Poly</Fit>{stackTri}</div>
          </div>
        </div>
        <div className="mt-[7px] flex h-[27px] items-center pb-px pl-[5px]">
          <svg width="22" height="22" viewBox="0 0 22 22"><path d="M13 1l8 7-3 1-3 4 0 3-8-8 3 0 4-4z" fill={G} /><path d="M11 12L1 21" stroke={G} strokeWidth="1.600" /></svg>
          <div className="ml-[9px] h-4 w-px bg-black" />
          <svg width="10" height="24" viewBox="0 0 10 24" className="ml-[15px]"><path d="M0 1h10M1.500 1v21.500h7V1" fill="none" stroke="#aaa" strokeWidth="1.300" /><path d="M3 12h4v9H3z" fill={T} /></svg>
          <div className="ml-[16px] h-4 w-px bg-black" />
          <svg width="24" height="24" viewBox="0 0 24 24" className="ml-[9px]" fill="#666" stroke="#333" strokeWidth="1.300"><circle cx="6" cy="6" r="5.500" /><path d="M12 4h8v8h3l-5 6-4-6h3V7h-5z" fill="#555" /><circle cx="13" cy="17" r="5.500" /><path d="M18 12c6 3 6 9 0 11" fill="none" /></svg>
          <svg width="18" height="24" viewBox="0 0 18 24" className="ml-[9px]" fill="#666" stroke="#2c2c2c" strokeWidth="1.300"><path d="M1.500 6h15v16.500h-15zM.700 3.500h16.600V6H.700zM6 3.500v-2h6v2" /><path d="M5.500 8v12M9 8v12M12.500 8v12" strokeWidth="2" /></svg>
          <div className="ml-[12px] h-4 w-px bg-black" />
          <svg width="25" height="24" viewBox="0 0 25 24" className="ml-[9px]"><path d="M.500 1.500h18v22H.500z" fill={G} /><path d="M2 5h14M2.500 8.500h5v5h-5zM10 8.500h5v5h-5zM2.500 16.500h5v5h-5zM10 16.500h5v5h-5z" fill="none" stroke="#444" /><path d="M10 14l1-4L20 1l3 2-9 9z" fill={O} /></svg>
        </div>
        <div className="mt-[17px] flex h-[4px] items-center pl-[7px]"><div className="h-px w-[103px] bg-[#6a6a6a]" /><div className="mx-[3px] h-[4px] w-[14px] bg-[conic-gradient(#ddd_25%,transparent_0)] bg-[length:2px_2px]" /><div className="h-px w-[102px] bg-[#6a6a6a]" /></div>
        <div className="mt-[6px] flex h-[437px]">
          <div className="flex h-[437px] w-[229px] flex-col overflow-hidden">
            <div className={roll + " h-[23px] shrink-0 rounded-t-none border-t-0"} />
            <div className={roll + " mt-[5px] flex h-[23px] shrink-0 items-center pl-[7px] font-bold text-white"}><svg width="6" height="9" viewBox="0 0 6 9"><path d="M0 0l6 4.500L0 9z" fill="#ccc" /></svg><Fit w={90} className="ml-[9px]">Soft Selection</Fit><Dots /></div>
            <div className={roll + " mt-[4px] h-[369px] shrink-0"}>
              <div className="flex h-[22px] items-center pl-[6px] font-bold text-white"><svg width="8" height="7" viewBox="0 0 8 7"><path d="M0 0h8L4 7z" fill="#ccc" /></svg><Fit w={66} className="ml-[8px]">Edit Edges</Fit><Dots /></div>
              <div className="mt-[9px] ml-[13px] grid grid-cols-[95px_95px] gap-x-[7px] gap-y-[7px]">
                <div className="col-span-2"><Btn w="w-[198px]" tw={75}>Insert Vertex</Btn></div>
                <Btn w="w-[96px]" tw={46}>Remove</Btn><Btn w="w-[96px]" tw={25}>Split</Btn>
                <div className="flex"><Btn w="w-[76px]" tw={43}>Extrude</Btn><Mini /></div><div className="flex"><Btn w="w-[76px]" tw={29}>Weld</Btn><Mini /></div>
                <div className="flex"><Btn w="w-[76px]" tw={49}>Chamfer</Btn><Mini /></div><Btn w="w-[96px]" tw={72}>Target Weld</Btn>
                <div className="flex"><Btn w="w-[76px]" tw={36}>Bridge</Btn><Mini /></div><div className="flex"><Btn w="w-[76px]" tw={46}>Connect</Btn><Mini /></div>
              </div>
              <div className="mt-[9px] ml-[13px]"><Btn w="w-[198px]" tw={168}>Create Shape From Selection</Btn></div>
              <fieldset className="mt-[3px] ml-[11px] h-[134px] w-[202px] rounded-[3px] border border-[#3c3c3c] px-0 text-white">
                <legend className="ml-[5px] h-[18px] px-[2px] leading-[19px]"><Fit w={90}>Edge Properties</Fit></legend>
                <div className="mt-[4px] flex h-[20px] items-center pl-[23px]"><Fit w={45} className="mr-[13px]">Weight:</Fit><Spin v="1,0" cls="border-[#4a4a4a]" /></div>
                <div className="mt-[4px] flex h-[20px] items-center pl-[23px]"><Fit w={45} className="mr-[13px]">Crease:</Fit><Spin v="1" cls="border-[#d8d8d8]" /></div>
                <div className="mt-[6px] flex gap-[7px] pl-[5px]"><Btn w="w-[91px]" tw={27}>Hard</Btn><Btn w="w-[91px]" tw={43}>Smooth</Btn></div>
                <div className="mt-[9px] flex items-center pl-[6px]"><div className="h-[22px] w-[26px] border border-black bg-[#00fa6e]" /><div className="ml-[4px] h-[14px] w-[13px] border border-[#474747] bg-[#646464]" /><Fit w={109} className="ml-[3px] pt-px">Display Hard Edges</Fit></div>
              </fieldset>
              <div className="mt-[5px] ml-[13px] flex gap-[7px]"><Btn w="w-[97px]" tw={44}>Edit Tri.</Btn><Btn w="w-[95px]" tw={27}>Turn</Btn></div>
            </div>
            <div className={roll + " mt-[3px] flex h-[23px] shrink-0 items-center pl-[6px] font-bold text-white"}><svg width="8" height="7" viewBox="0 0 8 7"><path d="M0 0h8L4 7z" fill="#ccc" /></svg><Fit w={87} className="ml-[8px]">Edit Geometry</Fit><Dots /></div>
          </div>
          <div className="ml-[3px] h-[437px] w-[8px] rounded bg-[#393939] pt-[62px]"><div className="mx-px h-[122px] rounded-[3px] bg-[#525252]" /></div>
        </div>
      </div>
    </div>
  );
}

function Timeline() {
  const frames = Array.from({ length: 101 }, (_, i) => i);
  const chip = "flex h-[20px] items-center justify-center rounded-[4px] bg-[#636363] pt-px";
  return (
    <div className="shrink-0 font-['DejaVu_Sans_Condensed','DejaVu_Sans',sans-serif] text-[12px] text-[#d5d5d5]">
      <div className="flex h-[29px] items-start gap-[2px] pt-[3px] pl-[2px]">
        <div className="mt-1 mr-[5px] h-[25px] w-[3px] bg-[conic-gradient(#999_25%,transparent_0)] bg-[length:2px_2px]" />
        <div className={chip + " w-[18px]"}>&lt;</div><div className={chip + " w-[154px]"}><Fit w={41}>0 / 100</Fit></div><div className={chip + " w-[18px]"}>&gt;</div>
      </div>
      <div className="ml-[11px] flex h-[32px] border-t border-[#111]">
        <div className="flex w-[62px] items-center pl-[17px]">
          <svg width="20" height="12" viewBox="0 0 20 12"><path d="M0 1h3M0 4h3M0 7h3M0 10h3" stroke={G} /><path d="M5 6c2-7 4-7 6 0s4 6 7 0" fill="none" stroke={T} strokeWidth="1.200" /></svg>
        </div>
        <svg width="1786" height="31" viewBox="73 932 1786 31" className="block overflow-visible bg-[#2a2a2a]">
          <path d="M76 934h9v28h-9z" fill="#8b8423" />
          <g stroke="#6f6f6f" shapeRendering="crispEdges">
            {frames.map((f) => { const x = Math.round(80 + f * 17.715) + 0.500; return <path key={f} d={f % 5 ? `M${x} 932v13` : `M${x} 932v30`} />; })}
          </g>
          <g fontSize="12" textAnchor="middle">
            {frames.filter((f) => f % 5 === 0).map((f) => <text key={f} x={79.500 + f * 17.705} y="958" textLength={String(f).length * 7} fill={f ? "#bcbcbc" : "#e6df3a"}>{f}</text>)}
          </g>
        </svg>
      </div>
    </div>
  );
}

const Field = ({ v, tw, cls }: { v: string; tw: number; cls: string }) => (
  <div className={"flex h-[22px] items-center border border-[#3c3c3c] bg-[#525252] pl-[3px] text-[#898989] " + cls}><Fit w={tw}>{v}</Fit></div>
);

function Nav({ children, fly }: { children: React.ReactNode; fly?: boolean }) {
  return <svg width="28" height="26" viewBox="0 0 28 26" className="block">{children}{fly && <path d="M26 20v5h-5z" fill="#eee" />}</svg>;
}

function Status() {
  return (
    <div className="flex h-[67px] shrink-0 pl-1 font-['DejaVu_Sans_Condensed','DejaVu_Sans',sans-serif] text-[12px] text-white">
      <div className="w-[123px] shrink-0 pt-[4px]">
        <div className="h-[29px] border-2 border-[#8a8a8a] border-r-[#ccc] border-b-[#ddd] bg-[#dbc3c3]" />
        <div className="h-[29px] overflow-hidden border-2 border-[#8a8a8a] border-r-white border-b-white bg-white pl-[3px] font-['Liberation_Mono',monospace] text-[14px] leading-[20px] whitespace-nowrap text-[#7a7480]"><Fit w={153}>MAXScript Mini Li</Fit></div>
      </div>
      <div className="ml-[3px] h-[62px] w-[2px] bg-[#222]" />
      <div className="ml-[5px] w-[679px] shrink-0 pt-[12px] leading-[16px]">
        <div><Fit w={102}>1 Object Selected</Fit></div>
        <div className="mt-[15px]"><Fit w={225}>Click or click-and-drag to select objects</Fit></div>
      </div>
      <div className="flex w-[545px] shrink-0 flex-col">
        <div className="mt-[8px] flex h-[24px] items-center">
          <svg width="18" height="20" viewBox="0 0 18 20"><path d="M.500 5V.500H5M13 .500h4.500V5M.500 15v4.500H5M13 19.500h4.500V15" fill="none" stroke={G} /><path d="M5 5h8v9H5z" fill={T} /></svg>
          <svg width="14" height="20" viewBox="0 0 14 20" className="ml-[16px]"><path d="M3.500 9V5c0-5 7-5 7 0v4" fill="none" stroke={G} strokeWidth="2" /><path d="M1 9h12v10H1z" fill={G} /><path d="M7 11.500v4" stroke={D} strokeWidth="2" /></svg>
          <svg width="17" height="18" viewBox="0 0 17 18" className="ml-[18px]"><path d="M0 0h17v18H0z" fill={G} /><circle cx="8.500" cy="9" r="3.500" fill="none" stroke={D} strokeWidth="1.500" /><path d="M8.500 2v4M8.500 12v4M2 9h3M12 9h3M2 5V2h3M12 2h3v3M2 13v3h3M12 16h3v-3" fill="none" stroke={D} strokeWidth="1.300" /></svg>
          <Fit w={12} className="ml-[10px]">X:</Fit><Field v="0,051cm" tw={48} cls="ml-[5px] w-[72px]" />
          <Fit w={12} className="ml-[15px]">Y:</Fit><Field v="-23,75cm" tw={54} cls="ml-[4px] w-[72px]" />
          <Fit w={12} className="ml-[15px]">Z:</Fit><Field v="0,0cm" tw={36} cls="ml-[4px] w-[73px]" />
          <Fit w={83} className="ml-[17px]">Grid = 25,4cm</Fit>
        </div>
        <div className="mt-[6px] flex h-[26px] items-center pl-[376px]">
          <div className="flex h-[25px] w-[26px] items-center justify-center rounded-[3px] bg-[#5f8bc4]"><svg width="16" height="17" viewBox="0 0 16 17" fill="none" stroke="#2c3850" strokeWidth="1.200"><path d="M8 1l7 3.500v8L8 16l-7-3.500v-8z" /><path d="M8 3.500l5 2.500v5L8 13.500 3 11V6zM3 6l5 2.500L13 6M8 8.500v5" stroke={G} strokeWidth="1" /></svg></div>
          <Fit w={81} className="ml-[7px]">Add Time Tag</Fit>
        </div>
      </div>
      <div className="w-[145px] shrink-0 pt-[8px]">
        <svg width="140" height="22" viewBox="0 0 140 22" fill={G}>
          <path d="M0 3h2v14H0zM2.500 10l8-6.500v13zM10.500 10l8-6.500v13zM31 10l9-7v14zM42 3h3v14h-3zM46.500 3h3v14h-3zM61 1l15 9-15 10zM87 3h3v14h-3zM91.500 3h3v14h-3zM97 3l9 7-9 7zM118 3.500l8 6.500-8 6.500zM126 3.500l8 6.500-8 6.500zM134 3h2v14h-2z" />
          <path d="M80 17v4h-5z" /><path d="M24.500 0v20M112.500 0v20" stroke="#222" />
        </svg>
        <div className="mt-[4px] flex items-center">
          <svg width="17" height="12" viewBox="0 0 17 12"><path d="M0 6l6-5v10zM17 6l-6-5v10z" fill={G} /></svg>
          <div className="ml-[8px] flex h-[21px] w-[88px] items-center justify-between border-l-2 border-[#333] bg-[#646464] pr-[4px] pl-[4px]"><span className="text-[#ddd]">0</span><svg width="6" height="12" viewBox="0 0 6 12"><path d="M3 0l3 5H0zM3 12l3-5H0z" fill="#ddd" /></svg></div>
          <svg width="20" height="20" viewBox="0 0 20 20" className="ml-[7px]"><circle cx="8" cy="8" r="7.500" fill={G} /><path d="M8 3v5l3 2" fill="none" stroke={D} strokeWidth="1.500" /><circle cx="14" cy="14" r="3.500" fill="#444" stroke={O} strokeWidth="2.500" /></svg>
        </div>
      </div>
      <div className="mt-[6px] ml-[13px] flex h-[54px] w-[53px] shrink-0 items-center justify-center rounded-[5px] bg-[#636363]">
        <svg width="38" height="38" viewBox="0 0 38 38"><path d="M13 2h6v12h12v6H19v14h-6V20H1v-6h12z" fill={G} stroke={D} /><path d="M33 19l-8 9M31 21l4 3M28 24l3 3" stroke={T} strokeWidth="2.500" fill="none" /><circle cx="23" cy="31" r="4" fill="none" stroke={T} strokeWidth="3" /></svg>
      </div>
      <div className="mt-[6px] ml-[5px] flex w-[58px] shrink-0 flex-col gap-[3px]"><Btn h="h-[25px]" w="w-[58px]" tw={26}>Auto</Btn><Btn h="h-[25px]" w="w-[58px]" tw={34}>Set K.</Btn></div>
      <div className="mt-[6px] ml-[5px] w-[145px] shrink-0">
        <div className="flex h-[23px] w-[143px] items-center justify-between border border-[#555] bg-[#646464] pr-2 pl-[8px] text-[#ddd]"><Fit w={49}>Selected</Fit><svg width="8" height="8" viewBox="0 0 8 8"><path d="M0 0h8L4 8z" fill="#e4e4e4" /></svg></div>
        <div className="mt-[5px] flex">
          <svg width="30" height="26" viewBox="-2 0 30 26"><path d="M3 3.500h18M3 20c5 0 5-6 5-15h8c0 9 1 15 5 15" fill="none" stroke={T} strokeWidth="2" /><path d="M9.500 1.500h5v5h-5z" fill="#444" stroke={G} /><path d="M1 2h3v3H1zM20 2h3v3h-3z" fill={G} /><path d="M26 20v5h-5z" fill="#eee" /></svg>
          <Btn h="h-[25px]" w="w-[112px]" tw={47}>Filters...</Btn>
        </div>
      </div>
      <div className="mt-[6px] ml-[11px] grid shrink-0 grid-cols-[28px_28px_28px_28px] grid-rows-[28px_26px]">
        <Nav><circle cx="15" cy="8" r="5.500" fill="none" stroke={G} strokeWidth="2" /><path d="M11 12l-7 8" stroke={G} strokeWidth="3" /></Nav>
        <Nav><path d="M13 1h4v4h-4zM18.500 1h4v8h-4zM13 6h4v4h-4zM18.500 10h4v4h-4z" fill={T} /><circle cx="12" cy="10" r="4" fill="#444" stroke={G} strokeWidth="2" /><path d="M9 13l-5 7" stroke={G} strokeWidth="2.500" /></Nav>
        <Nav fly><path d="M13 4l7 3.500v8l-7 4-7-4v-8z" fill={T} /><path d="M6 7.500l7 3.500 7-3.500M13 11v8" stroke="#2b6c6c" fill="none" /><path d="M3.500 5V2h4M18.500 2h4v3M3.500 17v3h4M22.500 17v3h-4" fill="none" stroke={G} /></Nav>
        <Nav fly><path d="M17 2l5 2.500v8L17 15l-4-2.500v-8z" fill={T} /><path d="M7 9l4 2v4l-3 2-4-2v-4zM13 14l4 2v3l-4 1.500-3-1.500v-3z" fill={G} /></Nav>
        <Nav fly><path d="M5 2l14 9-14 8M8 5c5 3 5 8 1 11" fill="none" stroke={G} strokeWidth="1.800" /></Nav>
        <Nav fly><path d="M9 20c-2-4-4-6-5-8 1-2 3 0 4 1V4c1-1 2-1 2.500 0v6V2c1-1 2-1 2.500 0v8-7c1-1 2-1 2.500 0v8-5c1-1 2-1 2.500 0v8c0 3-1 4-2 6z" fill={G} /></Nav>
        <Nav fly><circle cx="12" cy="10" r="7.500" fill={G} /><path d="M12 10V2.500a8 8 0 0 0-7.500 7.500z" fill={T} /><path d="M5 19c8 2 17-6 17-16" fill="none" stroke={G} strokeWidth="2.200" /><path d="M4 15c7 1 13-5 15-11" fill="none" stroke="#444" strokeWidth="1.500" /></Nav>
        <Nav><path d="M4 1h17v18H4z" fill={G} /><path d="M11 12l7-7M13 4h6v6" stroke={D} strokeWidth="2.200" fill="none" /><path d="M5.500 11h7v6.500h-7z" fill={D} /></Nav>
      </div>
    </div>
  );
}

function Task({ children, run, on }: { children: React.ReactNode; run?: boolean; on?: boolean }) {
  return (
    <div className={"flex h-[50px] w-[62px] shrink-0 flex-col items-center " + (on ? "bg-[#91483a]" : "")}>
      <svg width="34" height="47" viewBox="0 0 34 47" className="block">{children}</svg>
      {run && <div className={"h-[3px] bg-[#ffb3a6] " + (on ? "w-[60px]" : "w-[51px]")} />}
    </div>
  );
}

const Adobe = ({ t, c, b }: { t: string; c: string; b: string }) => (
  <g><path d="M4 11.500h26v26H4z" fill={b} stroke={c} strokeWidth="2" /><text x="17" y="30" fontSize="15" fontWeight="700" textAnchor="middle" fill={c}>{t}</text></g>
);

function Taskbar() {
  return (
    <div className="relative flex h-[50px] shrink-0 bg-[#361a16] font-['Open_Sans',sans-serif]">
      <div className="absolute top-0 left-[306px] h-[37px] w-[1166px] overflow-hidden bg-[#503430]">
        <div className="absolute top-[1px] left-[66px] h-[7px] overflow-hidden text-[13px] leading-[14px] text-[#2e1512]"><Fit w={94}>RECOVERY (E:)</Fit></div>
        <div className="absolute top-[15px] left-[48px] text-[15px] leading-[16px] text-[#2e1512]">eme</div>
        <svg className="absolute top-[8px] left-[1104px]" width="52" height="29" viewBox="0 0 52 29" fill="none" stroke="#38252a"><path d="M1 1h27v27H1zM34 8h17v13H34z" /><path d="M7 8h4v4H7zM7 14h4v4H7zM7 20h4v4H7zM14 10h4m2 0h4M14 16h4m2 0h4M14 22h4m2 0h4" /><path d="M36 10h13v9H36z" fill="#3a2c38" /></svg>
      </div>
      <div className="relative flex w-full">
        <svg width="183" height="50" viewBox="0 0 183 50" className="block shrink-0">
          <path d="M20 17.500l8.500-1.300v8.300H20zM29.500 16l10.500-1.500v10H29.500zM20 25.500h8.500v8.300L20 32.500zM29.500 25.500H40v10L29.500 34z" fill="#fff" />
          <circle cx="90" cy="25" r="8.500" fill="none" stroke="#fff" strokeWidth="2.200" />
          <path d="M142.500 16.500h15v17h-15zM141 19h-3v12h3M159 19h3v12h-3" fill="none" stroke="#fff" strokeWidth="1.300" />
        </svg>
        <Task><circle cx="17.500" cy="26" r="9" fill="none" stroke="#5cc4f4" strokeWidth="5.500" /><path d="M9 26.500h17" stroke="#5cc4f4" strokeWidth="4.500" /><path d="M20 30.500h11" stroke="#361a16" strokeWidth="3" /><path d="M5 37c-4-6 8-24 20-26 4 0 4 4 2 8" fill="none" stroke="#f7c52c" strokeWidth="2.400" /></Task>
        <Task run><path d="M17 10a14.500 14.500 0 1 0 0 29.500a14.500 14.500 0 1 0 0-29.500zm0 4a6.500 10.500 0 1 1 0 21.500a6.500 10.500 0 1 1 0-21.500z" fill="#e3162a" fillRule="evenodd" /></Task>
        <Task><path d="M2 10h30v30H2z" fill="#fff" /><text x="17" y="32" fontSize="25" fontWeight="700" textAnchor="middle" fill="#222c3d">a</text><path d="M7 34c7 4 14 4 20 0m-1 4l2-5-5 0" fill="none" stroke="#f59a1e" strokeWidth="1.800" /></Task>
        <Task><path d="M2 10h30v30H2z" fill="#1e7ae0" /><text x="17" y="23" fontSize="10" fontWeight="700" textAnchor="middle" textLength="14" fill="#fff">sky</text><path d="M13 26l8 3.500-8 4z" fill="#7ed321" /></Task>
        <Task run><path d="M4 13h11l2 3h14v18H4z" fill="#f6d271" /><path d="M6 16h23v4H6z" fill="#fde9a9" /><path d="M8 36V26h18v10h-5v-5h-8v5z" fill="#39a7e6" /></Task>
        <Task run><circle cx="17" cy="25" r="14" fill="#1ed45f" /><path d="M9 20c6-2 12-1 17 1.500M10 25.500c5-1.500 10-1 14 1.500M11 30c4-1 8-.500 12 1.500" fill="none" stroke="#361a16" strokeWidth="2.400" strokeLinecap="round" /></Task>
        <Task run><path d="M2 19L17 12l15 7v17H2z" fill="#fff" /><path d="M4 19h26L17 28l2 6-6-9z" fill="#402622" /></Task>
        <Task><circle cx="13" cy="20" r="9" fill="#fff" /><circle cx="21" cy="30" r="9" fill="#fff" /><circle cx="17" cy="25" r="11.500" fill="#fff" /><text x="17" y="33" fontSize="23" fontWeight="700" textAnchor="middle" fill="#402622">S</text></Task>
        <Task><circle cx="17" cy="25" r="13" fill="#6b3fa0" stroke="#d8c8e8" strokeWidth="2" /><path d="M10 16l4 3c2-.6 4-.6 6 0l4-3c1 3 1 5 1 7 0 5-3 6-5 6.500 1 2 1 5 1 7.500h-8v-3c-3 0-4-2-5-4 2 0 3 2 5 1.500 0-1 0-1.500 1-2-3-.500-5-2-5-6.500 0-3 0-4 1-7z" fill="#fff" /></Task>
        <Task><path d="M13 11h8L11 35l-9 3z" fill="#2f9e4f" /><path d="M17 11h5l9 27h-9z" fill="#1b8ad3" /><path d="M10 31h12l-3 7z" fill="#0e5f9c" /></Task>
        <Task run on><path d="M2 10h30v30H2z" fill="#d9ecec" /><text x="16" y="31" fontSize="23" fontWeight="800" textAnchor="middle" fill="#158a92">3</text><text x="23" y="38" fontSize="6" fontWeight="700" textAnchor="middle" fill="#158a92">MAX</text></Task>
        <Task><path d="M2 10h30v30H2z" fill="#f8e8e4" /><path d="M5 36l9-23h6l9 23h-6l-2-6h-8l-2 6zm9-10h6l-3-8z" fill="#c32026" /></Task>
        <Task><path d="M4 11h27v26H4z" fill="#d5161a" /><circle cx="20.500" cy="23.500" r="6" fill="none" stroke="#fff" strokeWidth="2" /><circle cx="13.500" cy="25.500" r="4.500" fill="none" stroke="#fff" strokeWidth="2" /><path d="M14 21l8 7" stroke="#fff" strokeWidth="2" /></Task>
        <Task><Adobe t="Id" c="#f13f93" b="#49021f" /></Task>
        <Task><Adobe t="Ai" c="#f98a0c" b="#261300" /></Task>
        <Task><Adobe t="Ps" c="#0fc1f5" b="#001d26" /></Task>
        <Task><path d="M4 11.500h26v26H4z" fill="#230505" stroke="#cf1c10" strokeWidth="2" /><path d="M9 33c5-3 9-10 8-17-.3-2-2-1-1 2 2 7 6 11 11 10 1-2-11-1-16 3" fill="none" stroke="#fff" strokeWidth="1.600" /></Task>
        <Task run><path d="M4 12h27v26H4z" fill="#fff" /><path d="M6 31l8-13 6 8 3-4 6 8v3l-5-5-2 2-7-6-9 11z" fill="#503430" /></Task>
        <svg width="276" height="50" viewBox="1500 1030 276 50" className="ml-[201px] block shrink-0">
          <circle cx="1528" cy="1056" r="13" fill="#1b93dc" stroke="#fff" strokeWidth="2" /><text x="1527" y="1064" fontSize="21" fontWeight="700" textAnchor="middle" fill="#fff">?</text><circle cx="1538" cy="1062" r="6" fill="#f3b61f" /><text x="1538" y="1066" fontSize="10" fontWeight="700" textAnchor="middle" fill="#fff">i</text>
          <g fill="none" stroke="#fff" strokeWidth="1.500"><circle cx="1579" cy="1055" r="3.800" /><path d="M1573.500 1064c0-7 11-7 11 0" /><circle cx="1586" cy="1050" r="3.500" /><path d="M1585 1054c4 0 6 3 6 6" /><path d="M1620 1059l7-8 7 8" /></g>
          <path d="M1652 1061c-6 0-5-8 0-8 1-6 9-6 11-1 6-1 6 9 0 9z" fill="#fff" />
          <g fill="none" stroke="#fff" strokeWidth="1.400"><path d="M1682 1050h14v10h-14zM1697 1053h2v4h-2" /><path d="M1684.500 1052.500h9v5h-9z" fill="#fff" /><path d="M1678 1048v4h4v-4M1680 1052v8" /></g>
          <g fill="none" stroke="#fff" strokeWidth="1.300"><path d="M1711 1062c0-9 5-13 14-13M1714 1062c0-6 4-10 11-10M1718 1062c0-4 2-6 7-7M1721 1062c1-2 2-3 4-4" /><path d="M1738 1052h3l5-5v17l-5-5h-3zM1749 1052c2 2 2 5 0 7" /><path d="M1752 1050c3 3 3 8 0 11" stroke="#a58a86" /></g>
        </svg>
        <div className="flex w-[78px] shrink-0 -translate-x-[5px] flex-col items-center pt-[4px] text-[13.500px] leading-[18px] text-white"><Fit w={34}>14:16</Fit><Fit w={75} className="mt-[5px]">14/02/2018</Fit></div>
        <svg width="60" height="50" viewBox="1860 1030 60 50" className="ml-auto block shrink-0">
          <path d="M1869 1045h20v17h-13v5l-5-5h-2z" fill="#fff" /><path d="M1872 1049.500h14M1872 1053.500h14M1872 1057.500h14" stroke="#361a16" strokeWidth="1.500" />
          <circle cx="1888" cy="1065" r="9.500" fill="#8f4436" stroke="#c8968c" /><text x="1888" y="1070" fontSize="13" textAnchor="middle" fill="#fff">1</text><path d="M1914.500 1030v50" stroke="#7d6661" />
        </svg>
      </div>
    </div>
  );
}

export default function App() {
  return (
    <div className="flex h-[1080px] w-[1920px] flex-col overflow-hidden bg-[#444444] font-['DejaVu_Sans_Condensed','DejaVu_Sans',sans-serif]">
      <Header />
      <Toolbar />
      <Ribbon />
      <div className="flex h-[758px] shrink-0">
        <LeftPanel />
        <Viewports />
        <RightPanel />
      </div>
      <Timeline />
      <Status />
      <Taskbar />
    </div>
  );
}
